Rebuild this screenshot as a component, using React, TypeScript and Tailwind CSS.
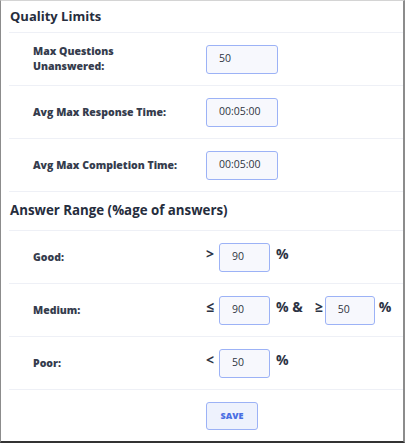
import React from 'react';

const font = { fontFamily: '"Open Sans", "Noto Sans", sans-serif' };

const Field: React.FC<{ value: string; w?: string }> = ({ value, w = 'w-[72px]' }) => (
  <div
    className={`${w} h-[29px] flex items-center pl-[12px] rounded-[3px] border border-[#9cb2f6] bg-[#f7f8fd] text-[10.5px] text-[#2f3542]`}
  >
    {value}
  </div>
);

const Row: React.FC<{ label: React.ReactNode; children: React.ReactNode }> = ({ label, children }) => (
  <div className="grid grid-cols-[173px_1fr] items-center h-[53px] pl-[24px] border-b border-[#eef0f6]">
    <div className="text-[10.5px] font-extrabold text-[#353c4d] leading-[15px]">{label}</div>
    <div className="flex items-center">{children}</div>
  </div>
);

const Sign: React.FC<{ children: React.ReactNode; className?: string }> = ({ children, className = '' }) => (
  <span className={`text-[14px] font-bold text-[#2c3344] ${className}`}>{children}</span>
);

export default function App() {
  return (
    <div
      style={font}
      className="w-[405px] h-[443px] bg-white border-l border-l-[#8c8c8c] border-t border-t-[#d4d4d4] border-r-2 border-r-[#8c8c8c] border-b-2 border-b-[#333333] overflow-hidden"
    >
      <div className="pl-[8px]">
        <div className="h-[32px] flex items-center pl-px border-b border-[#eef0f6]">
          <h2 className="text-[13px] font-bold text-[#262d3d]">Quality Limits</h2>
        </div>
        <Row label={<>Max Questions<br />Unanswered:</>}>
          <Field value="50" />
        </Row>
        <Row label="Avg Max Response Time:">
          <Field value="00:05:00" />
        </Row>
        <Row label="Avg Max Completion Time:">
          <Field value="00:05:00" />
        </Row>
        <div className="h-[39px] flex items-center pl-px border-b border-[#eef0f6]">
          <h2 className="text-[13.3px] font-bold text-[#262d3d]">Answer Range (%age of answers)</h2>
        </div>
        <Row label="Good:">
          <Sign className="w-[13px] -mt-[8px]">&gt;</Sign>
          <Field value="90" w="w-[51px]" />
          <Sign className="ml-[6px] -mt-[8px]">%</Sign>
        </Row>
        <Row label="Medium:">
          <Sign className="w-[13px] -mt-[8px]">≤</Sign>
          <Field value="90" w="w-[51px]" />
          <Sign className="ml-[6px] -mt-[8px]">% &amp;</Sign>
          <Sign className="ml-[12px] w-[10px] -mt-[8px]">≥</Sign>
          <Field value="50" w="w-[50px]" />
          <Sign className="ml-[4px] -mt-[8px]">%</Sign>
        </Row>
        <Row label="Poor:">
          <Sign className="w-[13px] -mt-[8px]">&lt;</Sign>
          <Field value="50" w="w-[51px]" />
          <Sign className="ml-[6px] -mt-[8px]">%</Sign>
        </Row>
        <div className="grid grid-cols-[197px_1fr] pt-[12px]">
          <div />
          <button className="w-[52px] h-[28px] rounded-[3px] border border-[#9cb2f6] bg-[#eef2fd] text-[9px] font-extrabold text-[#4a6fe3]">
            SAVE
          </button>
        </div>
      </div>
    </div>
  );
}
